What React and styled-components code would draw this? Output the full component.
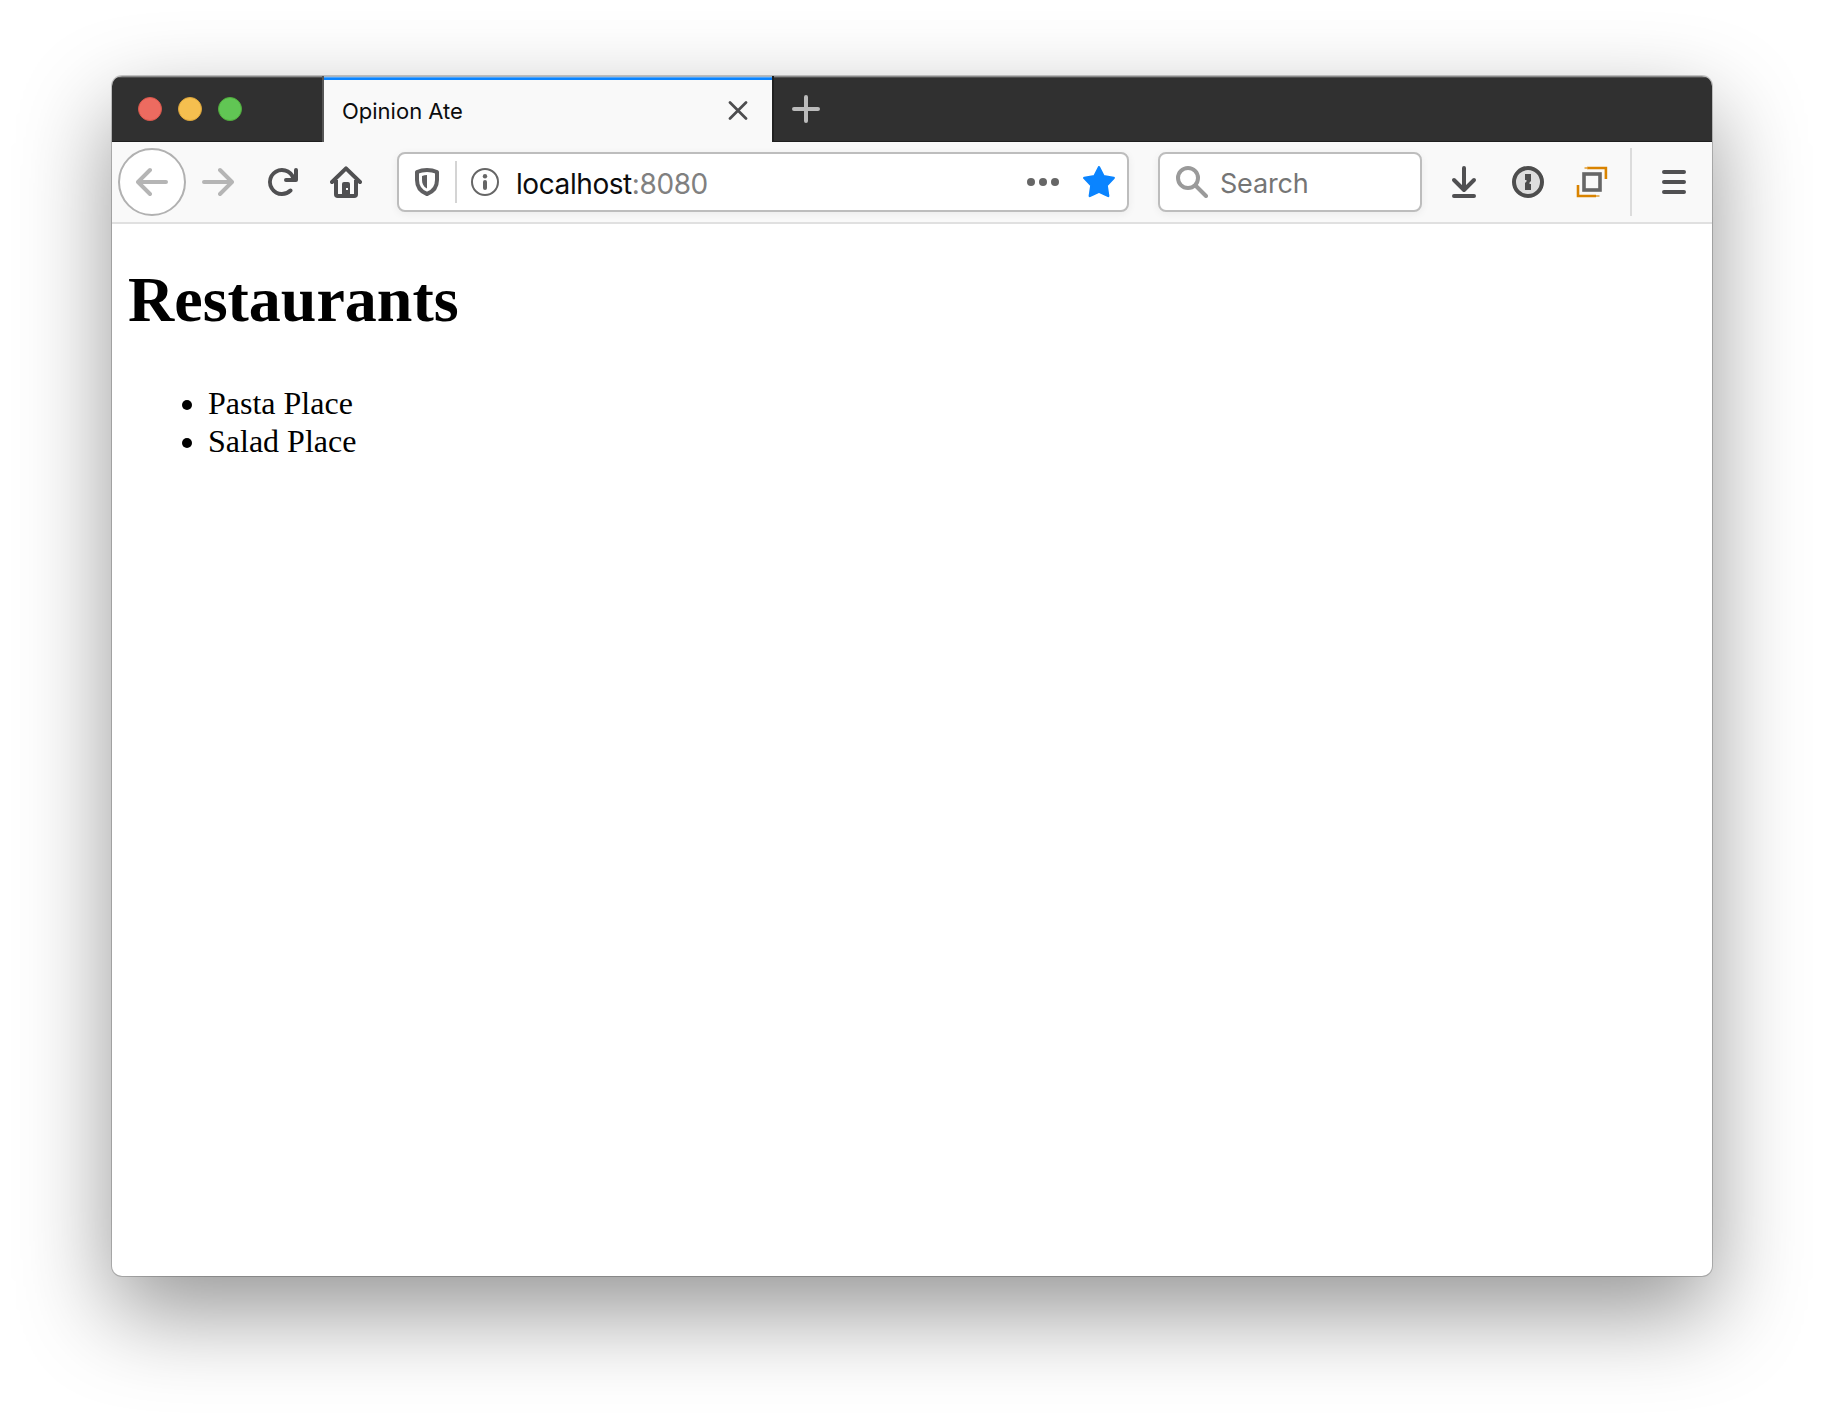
import React from "react";
import styled, { createGlobalStyle } from "styled-components";

const GlobalStyle = createGlobalStyle`
  * { box-sizing: border-box; }
  html, body { margin: 0; background: #fff; }
  body { overflow: hidden; }
`;

const ui = `"Inter", "Roboto", "Liberation Sans", sans-serif`;

const Desktop = styled.main`
  width: 1824px;
  height: 1424px;
  padding: 76px 112px 148px;
  background: #fff;
`;

const Window = styled.section`
  display: flex;
  flex-direction: column;
  width: 1600px;
  height: 1200px;
  border-radius: 10px;
  background: #fff;
  box-shadow: 0 0 0 1px rgba(0, 0, 0, 0.2), 0 36px 92px rgba(0, 0, 0, 0.42);
  overflow: hidden;
`;

const TitleBar = styled.header`
  display: flex;
  height: 66px;
  flex: none;
  background: linear-gradient(#8a8a8a 0 1px, #505050 1px 2px, #303030 2px 65px, #1f1f1f 65px);
`;

const Lights = styled.div`
  display: flex;
  align-items: center;
  gap: 16px;
  width: 212px;
  padding-left: 26px;
  border-right: 2px solid #565656;
`;

const Light = styled.span`
  width: 24px;
  height: 24px;
  border-radius: 50%;
  background: ${(p) => p.$fill};
  border: 1px solid ${(p) => p.$edge};
`;

const Tab = styled.div`
  display: flex;
  align-items: center;
  justify-content: space-between;
  width: 448px;
  padding: 3px 24px 0 18px;
  background: linear-gradient(#a3b4c4 0 1px, #4ba3fb 1px 2px, #0a84ff 2px 4px, #f9f9f9 4px);
`;

const TabTitle = styled.span`
  font: 400 22px/28px ${ui};
  letter-spacing: 0;
  color: #0c0c0d;
`;

const NewTab = styled.div`
  display: flex;
  align-items: center;
  padding-left: 18px;
  border-left: 2px solid #202020;
`;

const Toolbar = styled.nav`
  display: flex;
  align-items: center;
  height: 82px;
  flex: none;
  padding-left: 6px;
  background: #f9f9f9;
  border-bottom: 2px solid #e0e0e0;
`;

const BackButton = styled.div`
  display: flex;
  align-items: center;
  justify-content: center;
  width: 68px;
  height: 68px;
  border: 2px solid #b1b1b1;
  border-radius: 50%;
  background: #fff;
`;

const ToolButton = styled.div`
  display: flex;
  align-items: center;
  justify-content: center;
  width: 64px;
  height: 64px;
`;

const Field = styled.div`
  display: flex;
  align-items: center;
  width: ${(p) => p.$width}px;
  height: 60px;
  margin-left: ${(p) => p.$gap}px;
  padding: 0 ${(p) => p.$padRight || 0}px 0 16px;
  border: 2px solid #bdbdbd;
  border-radius: 8px;
  background: #fff;
  box-shadow: 0 2px 8px rgba(0, 0, 0, 0.06);
`;

const FieldDivider = styled.span`
  width: 2px;
  height: 42px;
  margin: 0 14px 0 16px;
  background: #d4d4d4;
`;

const Address = styled.span`
  flex: 1;
  margin-left: 17px;
  padding-top: 4px;
  font: 400 28px/34px ${ui};
  letter-spacing: -0.42px;
  color: #0c0c0d;
`;

const Port = styled.span`
  color: #808080;
`;

const SearchText = styled.span`
  margin-left: 12px;
  padding-top: 4px;
  font: 400 27px/34px ${ui};
  letter-spacing: -0.2px;
  color: #757575;
`;

const StarSlot = styled.span`
  display: flex;
  margin-left: 24px;
`;

const Divider = styled.span`
  width: 2px;
  height: 68px;
  margin: 0 10px 0 6px;
  background: #dcdcdc;
`;

const Tools = styled.div`
  display: flex;
  align-items: center;
  margin-left: 10px;
`;

const Page = styled.article`
  flex: 1;
  padding: 39px 16px 0;
  font: 400 32px/38px "Liberation Serif", "Times New Roman", serif;
  color: #000;
`;

const Heading = styled.h1`
  margin: 0 0 47px;
  font-size: 64px;
  line-height: 74px;
  font-weight: 700;
`;

const List = styled.ul`
  margin: 0;
  padding-left: 80px;
  list-style: disc;
`;

const Icon = ({ w = 32, h = 32, box, children, ...rest }) => (
  <svg width={w} height={h} viewBox={box || `0 0 ${w} ${h}`} fill="none" {...rest}>
    {children}
  </svg>
);

const arrow =
  "M15 7H3.414l4.293-4.293a1 1 0 0 0-1.414-1.414l-6 6a1 1 0 0 0 0 1.414l6 6a1 1 0 0 0 1.414-1.414L3.414 9H15a1 1 0 0 0 0-2z";

const BackIcon = () => (
  <Icon box="0 0 16 16"><path d={arrow} fill="#b5b5b5" /></Icon>
);

const ForwardIcon = () => (
  <Icon box="0 0 16 16"><path d={arrow} fill="#b5b5b5" transform="translate(16 0) scale(-1 1)" /></Icon>
);

const ReloadIcon = () => (
  <Icon box="0 0 16 16">
    <path
      fill="#505052"
      d="M15 1a1 1 0 0 0-1 1v2.418A6.995 6.995 0 1 0 8 15a6.954 6.954 0 0 0 4.95-2.05 1 1 0 0 0-1.414-1.414A5.019 5.019 0 1 1 12.549 6H10a1 1 0 0 0 0 2h5a1 1 0 0 0 1-1V2a1 1 0 0 0-1-1z"
    />
  </Icon>
);

const HomeIcon = () => (
  <Icon>
    <path d="M2 16 16 2.4 30 16" stroke="#505052" strokeWidth="4" strokeLinecap="round" strokeLinejoin="round" />
    <path d="M6 14v14.2q0 1.8 1.8 1.8h16.4q1.8 0 1.8-1.8V14" stroke="#505052" strokeWidth="4" />
    <path d="M12 29V18q0-2 2-2h4q2 0 2 2v11z" fill="#505052" />
    <rect x="16" y="22" width="2" height="2" fill="#f9f9f9" />
  </Icon>
);

const ShieldIcon = () => (
  <Icon w={24} h={28}>
    <path
      d="M12 2C8.5 2 5 2.7 2 4v8c0 7 3.2 11.5 10 14 6.800-2.500 10-7 10-14V4C19 2.7 15.5 2 12 2z"
      stroke="#5f5f61" strokeWidth="4" strokeLinejoin="round"
    />
    <path d="M12 7v13.600C8.300 18.600 7 15.500 7 12V8c1.600-.6 3.300-1 5-1z" fill="#5f5f61" />
  </Icon>
);

const InfoIcon = () => (
  <Icon w={28} h={28}>
    <circle cx="14" cy="14" r="13" stroke="#666" strokeWidth="2" />
    <circle cx="14" cy="8.2" r="2.2" fill="#666" />
    <path d="M14 14v6" stroke="#666" strokeWidth="4" strokeLinecap="round" />
  </Icon>
);

const MoreIcon = () => (
  <Icon>
    {[4, 16, 28].map((x) => <circle key={x} cx={x} cy="16" r="4" fill="#666" />)}
  </Icon>
);

const StarIcon = () => (
  <Icon>
    <path
      d="M16 1.200 20.600 10.300 30.700 11.900 23.600 19.300 25.200 30 16 25.700 6.800 30 8.400 19.300 1.300 11.900 11.400 10.300z"
      fill="#0a84ff" stroke="#0a84ff" strokeWidth="2.4" strokeLinejoin="round"
    />
  </Icon>
);

const SearchIcon = () => (
  <Icon>
    <circle cx="12" cy="12" r="10" stroke="#9a9a9a" strokeWidth="4" />
    <path d="m19.500 19.500 10.500 10.500" stroke="#9a9a9a" strokeWidth="4" strokeLinecap="round" />
  </Icon>
);

const DownloadIcon = () => (
  <Icon>
    <path d="M16 2v21M6 14l10 10 10-10M6 30h20" stroke="#505052" strokeWidth="4" strokeLinecap="round" strokeLinejoin="round" />
  </Icon>
);

const KeyholeIcon = () => (
  <Icon>
    <circle cx="16" cy="16" r="14" fill="#dedede" stroke="#4d4d4d" strokeWidth="4" />
    <path d="M13 8h6v7l-1.500 1.500v1.500H19v6h-6v-7l1.500-1.500V14H13z" fill="#4d4d4d" />
  </Icon>
);

const FramesIcon = () => (
  <Icon>
    <path d="M11 2h18.900v11M2 19v11h18" stroke="#d98300" strokeWidth="2.6" />
    <path d="M8.500 2h3M20 30h3.500" stroke="#e6b566" strokeWidth="2" />
    <rect x="8" y="8" width="16" height="16" stroke="#666" strokeWidth="3.6" />
  </Icon>
);

const MenuIcon = () => (
  <Icon>
    <path d="M6 6h20M6 16h20M6 26h20" stroke="#505052" strokeWidth="4" strokeLinecap="round" />
  </Icon>
);

const CloseIcon = () => (
  <Icon w={20} h={20}>
    <path d="m2 1.500 16 16M18 1.500 2 17.500" stroke="#4d4d4f" strokeWidth="2.7" strokeLinecap="round" />
  </Icon>
);

const PlusIcon = () => (
  <Icon w={28} h={28}>
    <path d="M14 2v24M2 14h24" stroke="#bbb" strokeWidth="4" strokeLinecap="round" />
  </Icon>
);

export default function App() {
  return (
    <Desktop>
      <GlobalStyle />
      <Window>
        <TitleBar>
          <Lights>
            <Light $fill="#ed6b60" $edge="#d9564b" />
            <Light $fill="#f5bf4f" $edge="#dca53a" />
            <Light $fill="#61c654" $edge="#50ac3c" />
          </Lights>
          <Tab>
            <TabTitle>Opinion Ate</TabTitle>
            <CloseIcon />
          </Tab>
          <NewTab><PlusIcon /></NewTab>
        </TitleBar>
        <Toolbar>
          <BackButton><BackIcon /></BackButton>
          <ToolButton><ForwardIcon /></ToolButton>
          <ToolButton><ReloadIcon /></ToolButton>
          <ToolButton><HomeIcon /></ToolButton>
          <Field $width={732} $gap={19} $padRight={12}>
            <ShieldIcon />
            <FieldDivider />
            <InfoIcon />
            <Address>localhost<Port>:8080</Port></Address>
            <MoreIcon />
            <StarSlot><StarIcon /></StarSlot>
          </Field>
          <Field $width={264} $gap={29}>
            <SearchIcon />
            <SearchText>Search</SearchText>
          </Field>
          <Tools>
            <ToolButton><DownloadIcon /></ToolButton>
            <ToolButton><KeyholeIcon /></ToolButton>
            <ToolButton><FramesIcon /></ToolButton>
            <Divider />
            <ToolButton><MenuIcon /></ToolButton>
          </Tools>
        </Toolbar>
        <Page>
          <Heading>Restaurants</Heading>
          <List>
            <li>Pasta Place</li>
            <li>Salad Place</li>
          </List>
        </Page>
      </Window>
    </Desktop>
  );
}
